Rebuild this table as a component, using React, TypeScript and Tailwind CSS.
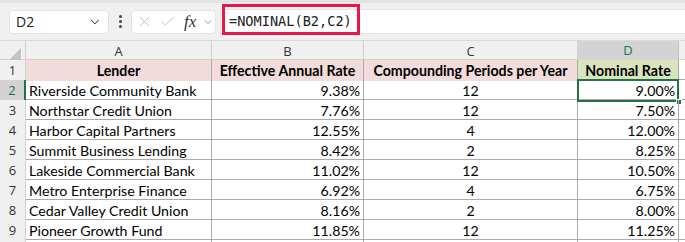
import { ChevronDown, X, Check } from "lucide-react";

const rows = [
  ["Riverside Community Bank", "9.38%", "12", "9.00%"],
  ["Northstar Credit Union", "7.76%", "12", "7.50%"],
  ["Harbor Capital Partners", "12.55%", "4", "12.00%"],
  ["Summit Business Lending", "8.42%", "2", "8.25%"],
  ["Lakeside Commercial Bank", "11.02%", "12", "10.50%"],
  ["Metro Enterprise Finance", "6.92%", "4", "6.75%"],
  ["Cedar Valley Credit Union", "8.16%", "2", "8.00%"],
  ["Pioneer Growth Fund", "11.85%", "12", "11.25%"],
];

const cols = ["A", "B", "C", "D"];
const gridCols = "grid grid-cols-[26px_186px_152px_214px_101px_1fr]";
const cellFont = "font-['Lato','Liberation_Sans',sans-serif] text-[14.2px] text-black";

const Toolbar = () => (
  <div className="relative h-[41px] bg-[#f0f0f0] border-t-[3px] border-[#e3e3e3] flex items-center pl-[9px] pr-0 gap-0 border-b border-b-[#d9d9d9]">
    <div className="w-[100px] h-[24px] bg-white rounded-[4px] border border-[#e3e3e3] flex items-center justify-between pl-[6px] pr-[6px]">
      <span className="font-['Open_Sans','Liberation_Sans',sans-serif] text-[14px] text-[#222]">D2</span>
      <ChevronDown className="w-[14px] h-[14px] text-[#444]" strokeWidth={1.8} />
    </div>
    <div className="w-[22px] flex flex-col items-center gap-[2px]">
      <span className="w-[3px] h-[3px] rounded-full bg-[#444]" />
      <span className="w-[3px] h-[3px] rounded-full bg-[#444]" />
      <span className="w-[3px] h-[3px] rounded-full bg-[#444]" />
    </div>
    <div className="w-[85px] h-[24px] bg-white rounded-[4px] border border-[#e3e3e3] flex items-center pl-[4px] gap-[6px]">
      <X className="w-[17px] h-[17px] text-[#bdbdbd]" strokeWidth={1.3} />
      <Check className="w-[17px] h-[17px] text-[#bdbdbd]" strokeWidth={1.3} />
      <span className="font-['Liberation_Serif',serif] italic text-[17px] text-[#333] leading-none ml-[2px]">fx</span>
      <ChevronDown className="w-[12px] h-[12px] text-[#777]" strokeWidth={1.6} />
    </div>
    <div className="flex-1 h-[25px] ml-[4px] bg-white border border-[#e3e3e3] border-r-0 flex items-center pl-[8px]">
      <span className="font-['DejaVu_Sans_Mono','Liberation_Mono',monospace] text-[13.6px] text-[#222]">=NOMINAL(B2,C2)</span>
    </div>
    <div className="absolute left-[222px] top-[1px] w-[138px] h-[31px] border-[3px] border-[#e8174a] pointer-events-none" />
  </div>
);

export default function App() {
  return (
    <div className="w-[685px] h-[242px] bg-white overflow-hidden">
      <Toolbar />
      <div className={`${gridCols} h-[19px] bg-[#f0f0f0] border-b border-[#d0d0d0]`}>
        <div className="relative border-r border-[#d0d0d0]">
          <div className="absolute right-[4px] bottom-[3px] w-0 h-0 border-l-[12px] border-l-transparent border-b-[12px] border-b-[#c4c4c4]" />
        </div>
        {cols.map((c) => (
          <div
            key={c}
            className={
              c === "D"
                ? "flex items-center justify-center bg-[#d3d3d3] border-b-2 border-[#217346] border-r border-r-[#c0c0c0] font-['Open_Sans','Liberation_Sans',sans-serif] text-[13px] text-[#217346]"
                : "flex items-center justify-center border-r border-[#d0d0d0] font-['Open_Sans','Liberation_Sans',sans-serif] text-[13px] text-[#333]"
            }
          >
            {c}
          </div>
        ))}
        <div />
      </div>
      <div className={`${gridCols} h-[20px] border-b border-[#ababab]`}>
        <div className="flex items-center justify-center bg-[#f0f0f0] border-r border-[#d0d0d0] font-['Open_Sans','Liberation_Sans',sans-serif] text-[13px] text-[#333]">1</div>
        <div className={`flex items-center justify-center bg-[#f2dcdb] border-r border-[#ababab] font-bold ${cellFont}`}>Lender</div>
        <div className={`flex items-center justify-center bg-[#f2dcdb] border-r border-[#ababab] font-bold ${cellFont}`}>Effective Annual Rate</div>
        <div className={`flex items-center justify-center bg-[#f2dcdb] border-r border-[#ababab] font-bold ${cellFont}`}>Compounding Periods per Year</div>
        <div className={`flex items-center justify-center bg-[#d8e4bc] border-r border-[#ababab] font-bold ${cellFont}`}>Nominal Rate</div>
        <div />
      </div>
      {rows.map((r, i) => {
        const sel = i === 0;
        return (
          <div key={i} className={`${gridCols} h-[20px] border-b border-[#ababab]`}>
            <div
              className={
                sel
                  ? "flex items-center justify-center bg-[#d3d3d3] border-r-2 border-[#217346] font-['Open_Sans','Liberation_Sans',sans-serif] text-[13px] text-[#217346]"
                  : "flex items-center justify-center bg-[#f0f0f0] border-r border-[#d0d0d0] font-['Open_Sans','Liberation_Sans',sans-serif] text-[13px] text-[#333]"
              }
            >
              {i + 2}
            </div>
            <div className={`flex items-center pl-[3px] border-r border-[#ababab] ${cellFont}`}>{r[0]}</div>
            <div className={`flex items-center justify-end pr-[3px] border-r border-[#ababab] ${cellFont}`}>{r[1]}</div>
            <div className={`flex items-center justify-center border-r border-[#ababab] ${cellFont}`}>{r[2]}</div>
            <div className={`relative flex items-center justify-end pr-[3px] border-r border-[#ababab] ${cellFont}`}>
              {r[3]}
              {sel && (
                <>
                  <div className="absolute -left-px -top-px -right-px -bottom-px border-2 border-[#217346] pointer-events-none" />
                  <div className="absolute -right-[4px] -bottom-[4px] w-[6px] h-[6px] bg-[#217346] border border-white" />
                </>
              )}
            </div>
            <div />
          </div>
        );
      })}
      <div className={`${gridCols} h-[2px]`}>
        <div className="bg-[#f0f0f0] border-r border-[#d0d0d0]" />
        <div className="border-r border-[#ababab]" />
        <div className="border-r border-[#ababab]" />
        <div className="border-r border-[#ababab]" />
        <div className="border-r border-[#ababab]" />
      </div>
    </div>
  );
}
